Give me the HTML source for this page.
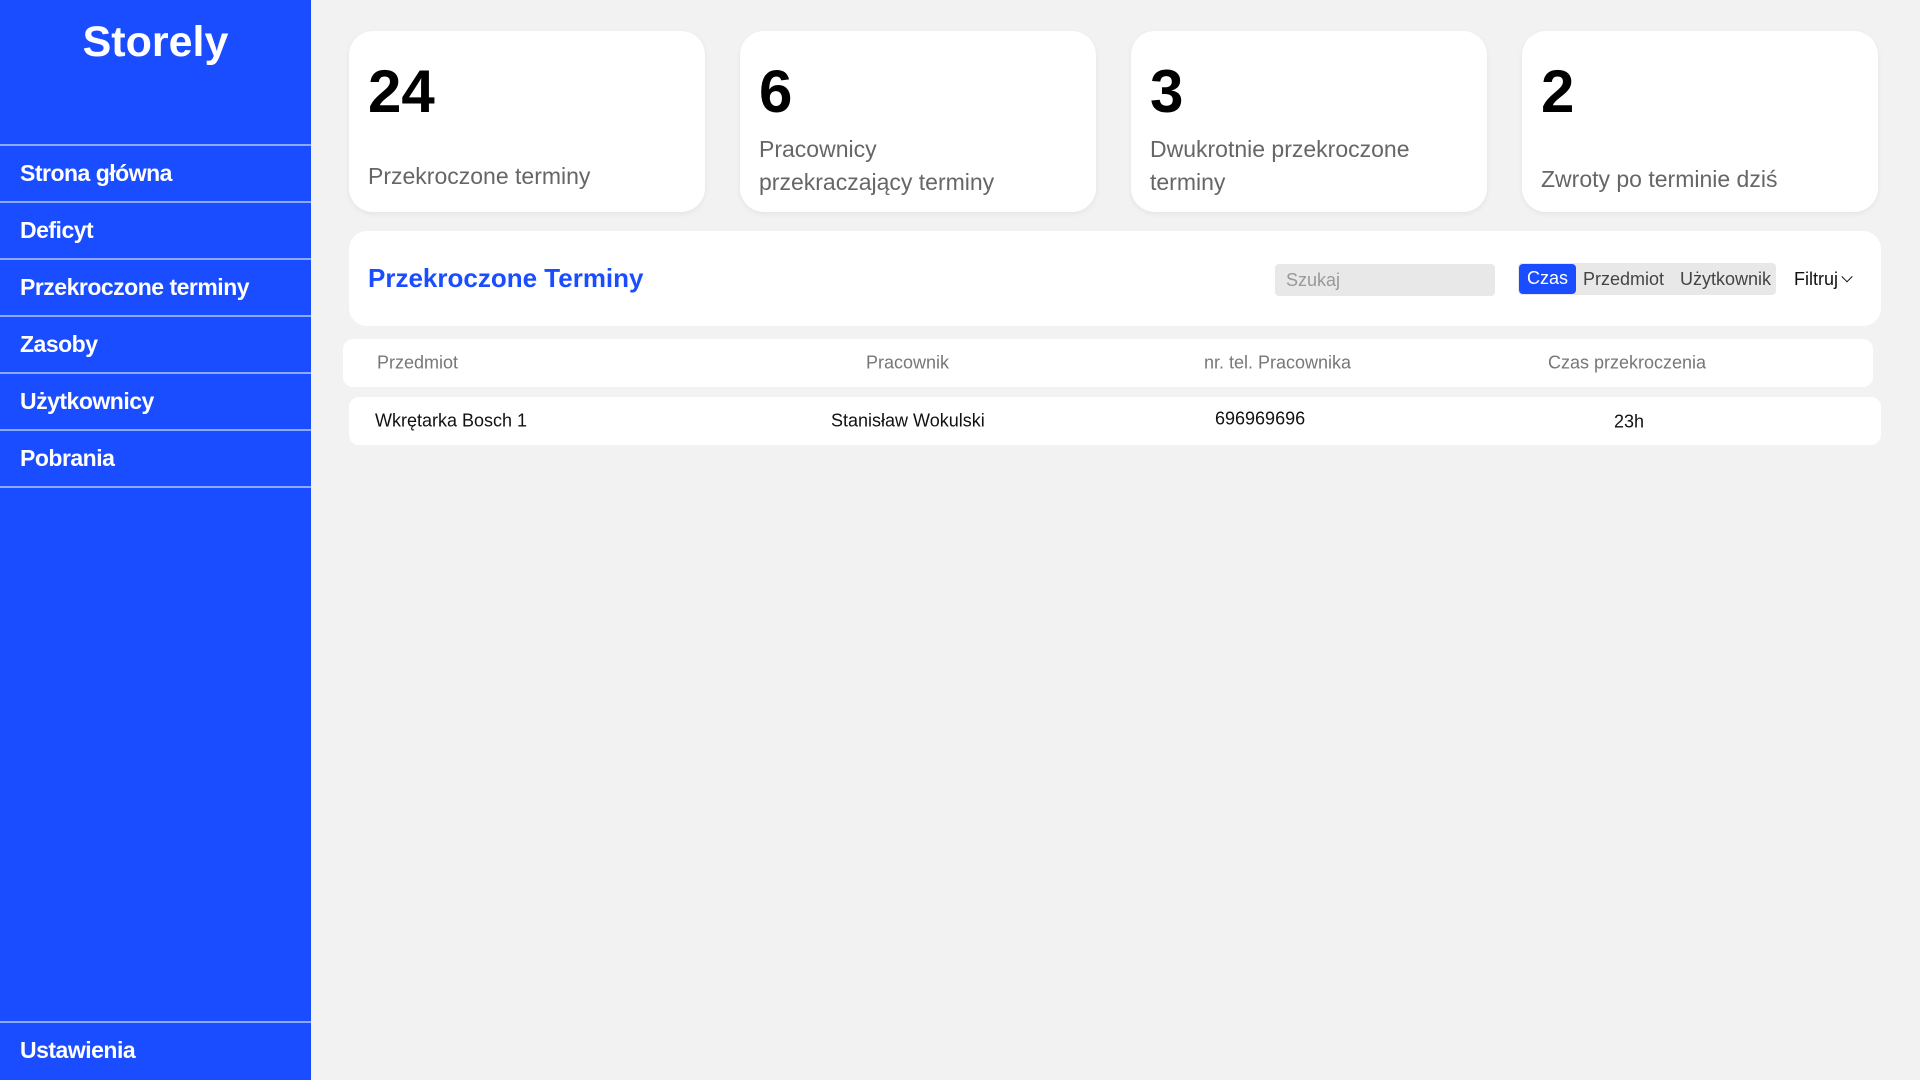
<!DOCTYPE html>
<html><head><meta charset="utf-8"><style>
*{box-sizing:border-box;margin:0;padding:0}
body{width:1920px;height:1080px;background:#f2f2f2;font-family:"Liberation Sans",sans-serif;position:relative;overflow:hidden}
.sb{position:absolute;left:0;top:0;width:311px;height:1080px;background:#1a4dff;color:#fff}
.logo{position:absolute;top:18px;width:311px;text-align:center;font-size:43px;font-weight:bold}
.nav{position:absolute;left:0;width:311px;height:57px;border-top:2px solid #8fa8ff;font-weight:bold;font-size:23px;padding-left:20px;line-height:55px;letter-spacing:-0.5px}
.card{position:absolute;top:31px;width:356px;height:181px;background:#fff;border-radius:24px;box-shadow:0 2px 6px rgba(0,0,0,.06)}
.card .n{position:absolute;left:19px;top:31px;font-size:60px;font-weight:bold;color:#000;line-height:60px}
.card .l{position:absolute;left:19px;font-size:23px;color:#666;line-height:33px}
.panel{position:absolute;left:349px;top:231px;width:1532px;height:95px;background:#fff;border-radius:18px}
.t{position:absolute;left:19px;top:32px;font-size:26px;font-weight:bold;color:#1a4dff}
.row{position:absolute;background:#fff;border-radius:10px;font-size:18px}
.row span{position:absolute;top:50%;transform:translateY(-50%)}
</style></head><body>
<div class="sb"><div class="logo">Storely</div>
<div class="nav" style="top:144px">Strona główna</div>
<div class="nav" style="top:201px">Deficyt</div>
<div class="nav" style="top:258px">Przekroczone terminy</div>
<div class="nav" style="top:315px">Zasoby</div>
<div class="nav" style="top:372px">Użytkownicy</div>
<div class="nav" style="top:429px">Pobrania</div>
<div class="nav" style="top:486px;height:2px"></div>
<div class="nav" style="top:1021px">Ustawienia</div>
</div>
<div class="card" style="left:349px"><div class="n">24</div><div class="l" style="top:129px">Przekroczone terminy</div></div>
<div class="card" style="left:740px"><div class="n">6</div><div class="l" style="top:102px">Pracownicy<br>przekraczający terminy</div></div>
<div class="card" style="left:1131px"><div class="n">3</div><div class="l" style="top:102px">Dwukrotnie przekroczone<br>terminy</div></div>
<div class="card" style="left:1522px"><div class="n">2</div><div class="l" style="top:132px">Zwroty po terminie dziś</div></div>
<div class="panel"><div class="t">Przekroczone Terminy</div>
<div style="position:absolute;left:926px;top:33px;width:220px;height:32px;background:#e8e8e8;border-radius:4px;color:#999;font-size:18px;line-height:32px;padding-left:11px">Szukaj</div>
<div style="position:absolute;left:1169px;top:32px;width:258px;height:32px;background:#e8e8e8;border-radius:4px;font-size:18px;line-height:32px;color:#444">
<span style="position:absolute;left:1px;top:1px;width:57px;height:30px;background:#1a4dff;color:#fff;border-radius:4px;text-align:center;line-height:29px">Czas</span>
<span style="position:absolute;left:65px">Przedmiot</span><span style="position:absolute;left:162px">Użytkownik</span></div>
<div style="position:absolute;left:1445px;top:32px;font-size:18px;line-height:32px;color:#111">Filtruj <span style="display:inline-block;width:8px;height:8px;border-right:1.5px solid #111;border-bottom:1.5px solid #111;transform:rotate(45deg) translate(-3px,-3px)"></span></div>
</div>
<div class="row" style="left:343px;top:339px;width:1530px;height:48px;color:#777">
<span style="left:34px">Przedmiot</span><span style="left:523px">Pracownik</span><span style="left:861px">nr. tel. Pracownika</span><span style="left:1205px">Czas przekroczenia</span></div>
<div class="row" style="left:349px;top:397px;width:1532px;height:48px;color:#111">
<span style="left:26px">Wkrętarka Bosch 1</span><span style="left:482px">Stanisław Wokulski</span><span style="left:866px;top:45%">696969696</span><span style="left:1265px;top:52%">23h</span></div>
</body></html>
